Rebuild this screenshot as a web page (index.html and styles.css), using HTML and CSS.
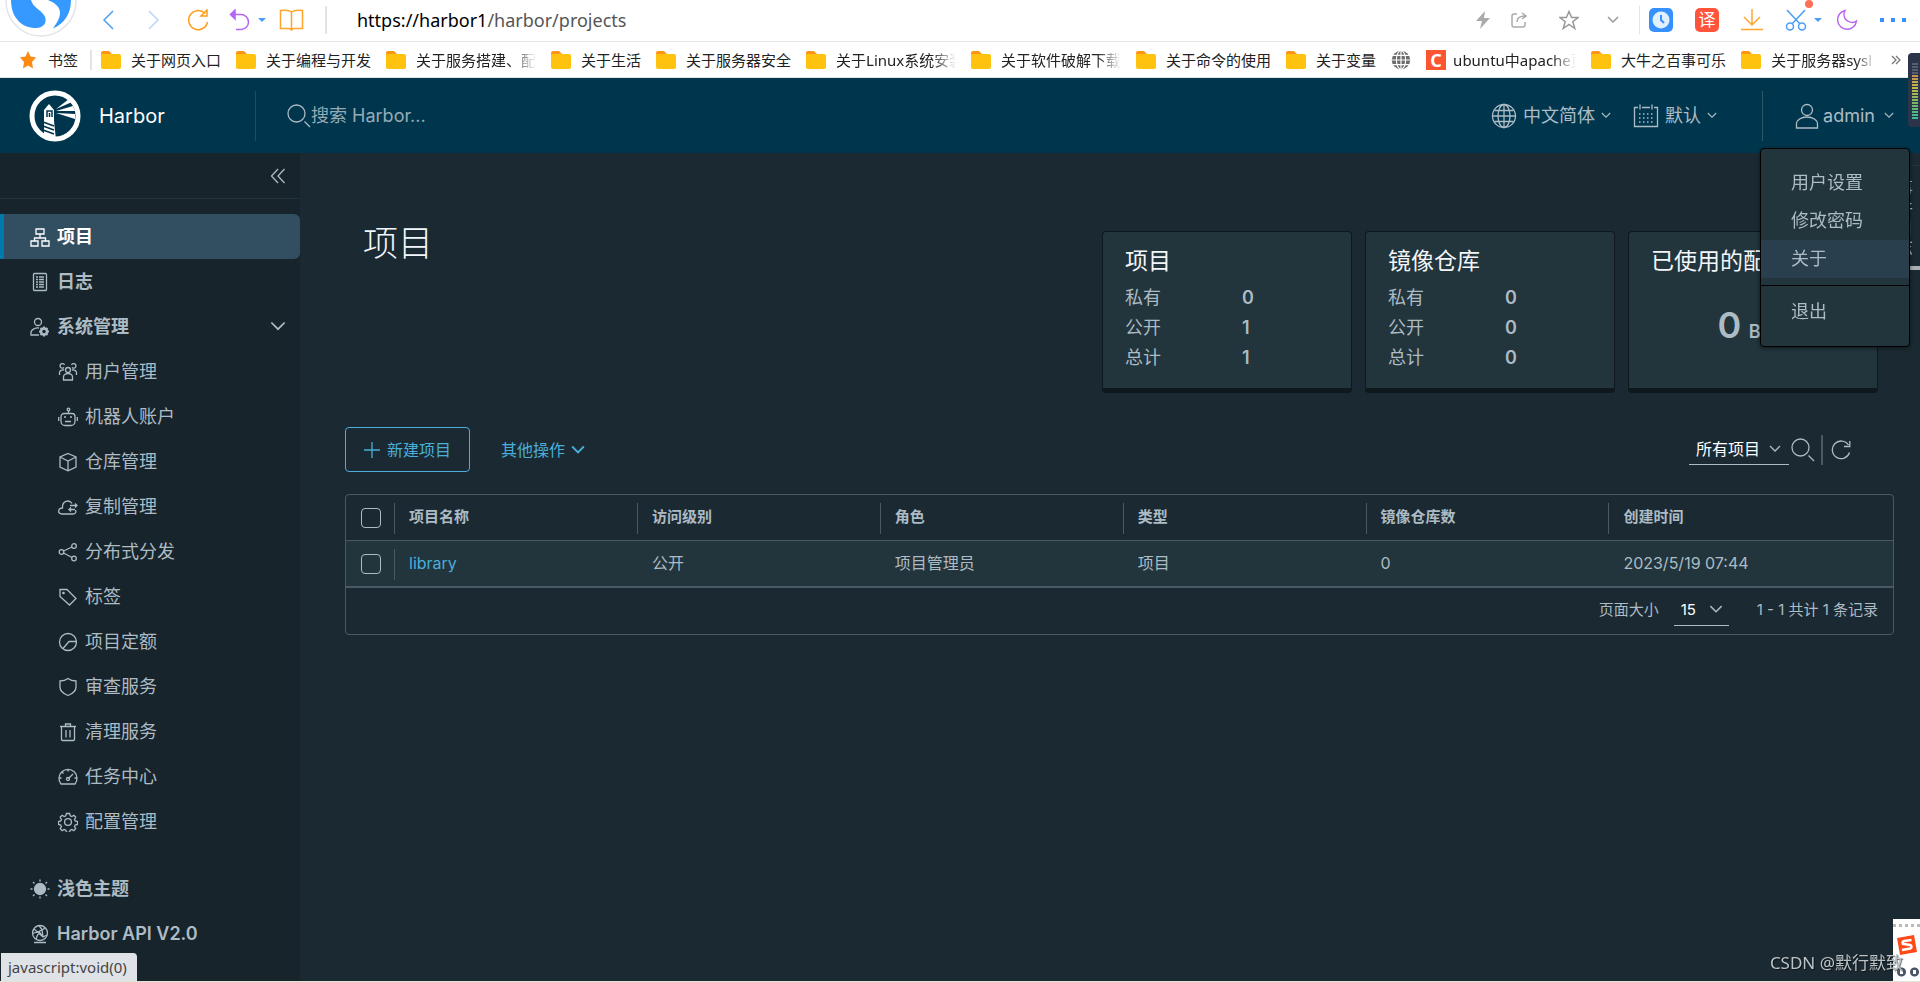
FILE: index.html
```html
<!DOCTYPE html>
<html lang="zh-CN">
<head>
<meta charset="utf-8">
<title>Harbor</title>
<link rel="stylesheet" href="styles.css">
</head>
<body>
<svg class="sprite" aria-hidden="true">
  <symbol id="folder" viewBox="0 0 20 18"><path d="M0 2a2 2 0 0 1 2-2h6l3 3v4H0z" fill="#ff9417"/><path d="M0 3h18a2 2 0 0 1 2 2v11a2 2 0 0 1-2 2H2a2 2 0 0 1-2-2z" fill="#ffc20e"/></symbol>
  <symbol id="angle" viewBox="0 0 12 8"><path d="M1 1l5 5 5-5"/></symbol>
  <symbol id="search" viewBox="0 0 24 24"><circle cx="9.500" cy="9.500" r="8.500"/><path d="M17.500 17.500l5.500 5.500"/></symbol>
  <symbol id="globe" viewBox="0 0 26 26"><circle cx="13" cy="13" r="11.500"/><ellipse cx="13" cy="13" rx="6" ry="11.500"/><path d="M13 1.500v23M1.500 13h23M3.500 7.500h19M3.500 18.500h19"/></symbol>
  <symbol id="calendar" viewBox="0 0 26 26"><path d="M5 4.500H1.500v19h23v-19H21M9 4.500h8M7 1.500v5M19 1.500v5"/><path d="M6 11h15M6 15h15M6 19h15" stroke-dasharray="1.500 2.500"/></symbol>
  <symbol id="user" viewBox="0 0 26 26"><circle cx="13" cy="7" r="5.500"/><path d="M2.500 25v-4a10.500 7 0 0 1 21 0v4z"/></symbol>
  <symbol id="org" viewBox="0 0 20 20"><path d="M6 2h8v5H6zM1 14h7v5H1zM12 14h7v5h-7zM10 7v4M4.500 14v-3h11v3"/></symbol>
  <symbol id="log" viewBox="0 0 20 20"><rect x="3.500" y="1.500" width="13" height="17" rx="1"/><path d="M6 5h2M9 5h5M6 7.500h2M9 7.500h5M6 10h2M9 10h5M6 12.500h2M9 12.500h5M6 15h2M9 15h5"/></symbol>
  <symbol id="admin" viewBox="0 0 20 20"><circle cx="8" cy="5" r="3.500"/><path d="M9 18H1v-3a7 5 0 0 1 8-4"/><circle cx="14" cy="14.500" r="3" stroke-width="2.500"/><path d="M14 9.500v2M14 17.500v2M9 14.500h2M17 14.500h2M10.500 11l1.500 1.500M16 16.500l1.500 1.500M17.500 11L16 12.500M12 16.500L10.500 18" stroke-width="2"/></symbol>
  <symbol id="group" viewBox="0 0 20 20"><circle cx="10" cy="8" r="2.500"/><path d="M5.500 18v-3a4.500 3.500 0 0 1 9 0v3zM6 5.500A2.300 2.300 0 1 1 6.500 3M14 5.500A2.300 2.300 0 1 0 13.500 3M1.500 13v-2.500a3.500 3 0 0 1 4.500-2.500M18.500 13v-2.500a3.500 3 0 0 0-4.500-2.500"/></symbol>
  <symbol id="robot" viewBox="0 0 20 20"><circle cx="10.500" cy="2.500" r="1.300"/><path d="M10.500 4v2M6 6.500h8a3 3 0 0 1 3 3v5a4 4 0 0 1-4 4H7a4 4 0 0 1-4-4v-5a3 3 0 0 1 3-3zM.7 10v4M19.300 10v4M6 10h2M12 10h2M7 14.500h6"/></symbol>
  <symbol id="box" viewBox="0 0 20 20"><path d="M10 1.500l8 3.500v10l-8 3.800L2 15V5zM2 5l8 4 8-4M10 9v9.500"/></symbol>
  <symbol id="cloud" viewBox="0 0 20 20"><path d="M17.500 13c1 2 0 4-2.500 4H4c-5 0-4-6 .5-6C4 4 11 2 14 6.500M12 8.500h7M17 6.500l2 2-2 2M17 12.500h-6M13 10.500l-2 2 2 2"/></symbol>
  <symbol id="share" viewBox="0 0 20 20"><circle cx="3.500" cy="10" r="2.300"/><circle cx="16" cy="4" r="2.300"/><circle cx="16" cy="16.500" r="2.300"/><path d="M5.500 9L14 5M5.500 11l8.500 4.500"/></symbol>
  <symbol id="tag" viewBox="0 0 20 20"><path d="M2 2.500h7l9 9-6.500 6.500L2 9.500z"/><circle cx="5.500" cy="6" r=".7"/></symbol>
  <symbol id="quota" viewBox="0 0 20 20"><circle cx="10" cy="10" r="8.500"/><path d="M18.500 9.500H11L5 16.500"/></symbol>
  <symbol id="shield" viewBox="0 0 20 20"><path d="M10 1.500c2.500 2 5 2.500 8 2.500v6c0 4-4 7-8 8.500-4-1.500-8-4.500-8-8.500V4c3 0 5.500-.5 8-2.500z"/></symbol>
  <symbol id="trash" viewBox="0 0 20 20"><path d="M2 4.500h16M3.500 4.500v13a1 1 0 0 0 1 1h11a1 1 0 0 0 1-1v-13M7.500 4V2h5v2M8 8v7.500M12 8v7.500"/></symbol>
  <symbol id="gauge" viewBox="0 0 20 20"><path d="M3 17a9 9 0 1 1 14 0zM10 2.500v2M1.500 11h2M16.500 11h2M4 5l1.500 1.500M10.500 11.500L15 7"/><circle cx="10" cy="12" r="1.500"/></symbol>
  <symbol id="cog" viewBox="0 0 20 20"><circle cx="10" cy="10" r="3.400"/><path d="M8.400 1.500h3.200l.6 2.300 1.600.7 2.100-1.200 1.800 1.900-1.200 2.200.7 1.500 2.300.7v2.800l-2.300.6-.7 1.600 1.200 2.100-1.900 1.900-2.100-1.200-1.500.7-.7 2.400H8.400l-.6-2.400-1.600-.7-2.100 1.200-1.900-1.900 1.200-2.100-.7-1.600-2.200-.6V9.600l2.200-.7.7-1.500L2.200 5.200l1.900-1.900 2.100 1.200 1.600-.7z"/></symbol>
  <symbol id="sun" viewBox="0 0 20 20"><circle cx="10" cy="10" r="5.500" fill="currentColor"/><path d="M10 .5v2M10 17.500v2M.5 10h2M17.500 10h2M3 3l1.500 1.500M15.500 15.500L17 17M17 3l-1.500 1.500M4.500 15.500L3 17"/></symbol>
  <symbol id="api" viewBox="0 0 20 20"><circle cx="10" cy="9" r="7.500"/><path d="M4 18.500h12M4 5l9 8M15.500 4L9 7.500 6 15M2.500 9.500L9 7.500l4 5.500 4-2M9 1.500l3 4 1 7.500"/></symbol>
  <symbol id="collapse" viewBox="0 0 16 16"><path d="M8 1L1.500 8 8 15M14.500 1L8 8l6.500 7"/></symbol>
</svg>

<div class="app">
  <div class="browser">
    <div class="toolbar">
      <svg class="brand-s" width="80" height="40" viewBox="0 0 80 40"><circle cx="41" cy="1" r="35" fill="#fff" stroke="#e2e4e8"/><path d="M11 0C11 18 22 28 36 28c8 0 11-6 9-11C43 11 33 8 31 0z" fill="#3699ff"/><path d="M48 0c14 6 16 14 5 28.500C64 24 71 14 71 0z" fill="#3699ff"/></svg>
      <div class="nav-buttons">
        <button class="back" aria-label="后退"><svg width="11" height="20" viewBox="0 0 11 20" stroke="#4a9df8"><path d="M10 1L1 10l9 9"/></svg></button>
        <button aria-label="前进"><svg width="11" height="20" viewBox="0 0 11 20" stroke="#b5d8fc"><path d="M1 1l9 9-9 9"/></svg></button>
        <button aria-label="刷新"><svg width="22" height="22" viewBox="0 0 22 22" stroke="#ff9d1c" stroke-width="2"><path d="M20.500 13A9.500 9.500 0 1 1 18 4.500M20 1v6h-6z"/></svg></button>
        <button class="with-caret" aria-label="撤销"><svg width="21" height="22" viewBox="0 0 21 22" stroke="#b565f5" stroke-width="2"><path d="M7 20.500h5a7.500 7.500 0 0 0 0-15H2"/><path d="M6 1L1.500 5.500 6 10z" fill="#b565f5"/></svg><i class="caret"></i></button>
        <button aria-label="书架"><svg width="25" height="22" viewBox="0 0 25 22" stroke="#ffa52e" stroke-width="2"><path d="M12.500 3C10 1 5 1 1.500 1.500v18h9l2 1.500 2-1.500h9v-18C20 1 15 1 12.500 3zv17"/></svg></button>
      </div>
      <div class="url" role="textbox" aria-label="地址栏">https://harbor1<span>/harbor/projects</span></div>
      <div class="page-actions">
        <svg width="16" height="18" viewBox="0 0 16 18"><path d="M10 0L1 10h6L5 18l10-11H9z" fill="#aaa"/></svg>
        <svg width="16" height="16" viewBox="0 0 16 16" stroke="#aaa" stroke-width="2"><path d="M6 2H3a2 2 0 0 0-2 2v9a2 2 0 0 0 2 2h9a2 2 0 0 0 2-2v-3M6 10c0-4 2-6 8-6M11 1l4 3-4 3"/></svg>
        <svg width="20" height="20" viewBox="0 0 20 20" stroke="#999"><path d="M10 1.500l2.600 6H19l-5.200 4.200 2 6.800-5.800-4-5.800 4 2-6.800L1 7.500h6.400z"/></svg>
        <svg width="12" height="8" stroke="#999"><use href="#angle"/></svg>
      </div>
      <div class="extensions">
        <svg width="24" height="24" viewBox="0 0 24 24"><rect width="24" height="24" rx="5" fill="#3691ff"/><circle cx="12" cy="12" r="8.500" fill="#e0f0ff"/><path d="M12 7v5l3 3" stroke="#3691ff" stroke-width="2"/></svg>
        <span class="translate">译</span>
        <svg width="22" height="22" viewBox="0 0 22 22" stroke="#ffa52e" stroke-width="2"><path d="M11 0v16M3 8l8 8 8-8M0 20.500h22"/></svg>
        <span class="with-caret scissors"><svg width="22" height="22" viewBox="0 0 22 22" stroke="#4a9df8"><path d="M2 1l13 14M20 1L7 15"/><circle cx="5" cy="17.500" r="3.500"/><circle cx="17" cy="17.500" r="3.500"/></svg><i class="caret"></i></span>
        <svg width="22" height="22" viewBox="0 0 22 22" stroke="#b565f5" stroke-width="2"><path d="M9 1.500A8 8 0 0 0 20.500 12 9.500 9.500 0 1 1 9 1.500z"/></svg>
        <svg width="26" height="4" viewBox="0 0 26 4"><path d="M0 0h4v4H0zM11 0h4v4h-4zM22 0h4v4h-4z" fill="#3691ff"/></svg>
      </div>
    </div>
    <nav class="bookmarks">
      <a class="marks" href="#"><svg width="16" height="18" viewBox="0 0 16 18"><path d="M8 0l2.500 5.500L16 6.500l-4 4.500 1 6.500-5-3-5 3L4 11 0 6.500l5.500-1z" fill="#ff8a12"/></svg>书签</a>
      <a href="#"><svg width="20" height="18"><use href="#folder"/></svg><span>关于网页入口</span></a>
      <a href="#"><svg width="20" height="18"><use href="#folder"/></svg><span>关于编程与开发</span></a>
      <a href="#" class="faded"><svg width="20" height="18"><use href="#folder"/></svg><span>关于服务搭建、配</span></a>
      <a href="#"><svg width="20" height="18"><use href="#folder"/></svg><span>关于生活</span></a>
      <a href="#"><svg width="20" height="18"><use href="#folder"/></svg><span>关于服务器安全</span></a>
      <a href="#" class="faded"><svg width="20" height="18"><use href="#folder"/></svg><span>关于Linux系统安装</span></a>
      <a href="#" class="faded"><svg width="20" height="18"><use href="#folder"/></svg><span>关于软件破解下载</span></a>
      <a href="#"><svg width="20" height="18"><use href="#folder"/></svg><span>关于命令的使用</span></a>
      <a href="#"><svg width="20" height="18"><use href="#folder"/></svg><span>关于变量</span></a>
      <a href="#" aria-label="网页"><svg width="20" height="20" viewBox="0 0 26 26"><circle cx="13" cy="13" r="12" fill="#6b6b6b"/><g stroke="#fff" stroke-width="1.500"><ellipse cx="13" cy="13" rx="6" ry="12"/><path d="M13 1v24M1 13h24M2 7h22M2 19h22"/></g></svg></a>
      <a href="#" class="faded site"><b class="c-icon">C</b><span>ubuntu中apache页</span></a>
      <a href="#"><svg width="20" height="18"><use href="#folder"/></svg><span>大牛之百事可乐</span></a>
      <a href="#" class="faded last"><svg width="20" height="18"><use href="#folder"/></svg><span>关于服务器sysl</span></a>
      <button class="more" aria-label="更多书签"><svg width="10" height="10" viewBox="0 0 10 10" stroke="#777"><path d="M1 1l4 4-4 4M5 1l4 4-4 4"/></svg></button>
    </nav>
  </div>

  <header class="header">
    <a class="logo" href="#">
      <svg width="52" height="52" viewBox="0 0 52 52"><circle cx="26" cy="26" r="23" fill="none" stroke="#fff" stroke-width="5"/><path d="M15 20l5-6 5 6v11H15z" fill="#fff"/><path d="M18 27v-6h5v6M20.500 27v-4" stroke="#00364d" stroke-width="1.500"/><path d="M15 31h10l2 19-12-3z" fill="#fff"/><path d="M14 32l11 4M14 36l11 4M14 40l11 4" stroke="#00364d" stroke-width="1.500"/><path d="M27 19l13-10 3 3zM27 21l17-5 2 5zM27 23l19 1v5z" fill="#fff"/></svg>
      <span>Harbor</span>
    </a>
    <label class="search"><svg width="24" height="24"><use href="#search"/></svg><input type="text" placeholder="搜索 Harbor..." aria-label="搜索 Harbor"></label>
    <div class="header-actions">
      <button><svg width="26" height="26"><use href="#globe"/></svg><span>中文简体</span><svg width="10" height="7"><use href="#angle"/></svg></button>
      <button><svg width="26" height="26"><use href="#calendar"/></svg><span>默认</span><svg width="10" height="7"><use href="#angle"/></svg></button>
    </div>
    <div class="account">
      <button><svg width="26" height="26"><use href="#user"/></svg><span>admin</span><svg width="10" height="7"><use href="#angle"/></svg></button>
      <div class="menu">
        <a href="#">用户设置</a>
        <a href="#">修改密码</a>
        <a href="#" class="hover">关于</a>
        <hr>
        <a href="#">退出</a>
      </div>
    </div>
  </header>

  <div class="content">
    <aside class="sidebar">
      <div class="collapse"><button aria-label="收起"><svg width="16" height="16"><use href="#collapse"/></svg></button></div>
      <nav class="side-nav">
        <a class="active" href="#"><svg><use href="#org"/></svg>项目</a>
        <a href="#"><svg><use href="#log"/></svg>日志</a>
        <a href="#"><svg><use href="#admin"/></svg>系统管理<svg class="expand"><use href="#angle"/></svg></a>
        <div class="sub">
          <a href="#"><svg><use href="#group"/></svg>用户管理</a>
          <a href="#"><svg><use href="#robot"/></svg>机器人账户</a>
          <a href="#"><svg><use href="#box"/></svg>仓库管理</a>
          <a href="#"><svg><use href="#cloud"/></svg>复制管理</a>
          <a href="#"><svg><use href="#share"/></svg>分布式分发</a>
          <a href="#"><svg><use href="#tag"/></svg>标签</a>
          <a href="#"><svg><use href="#quota"/></svg>项目定额</a>
          <a href="#"><svg><use href="#shield"/></svg>审查服务</a>
          <a href="#"><svg><use href="#trash"/></svg>清理服务</a>
          <a href="#"><svg><use href="#gauge"/></svg>任务中心</a>
          <a href="#"><svg><use href="#cog"/></svg>配置管理</a>
        </div>
        <a href="#"><svg><use href="#sun"/></svg>浅色主题</a>
        <a href="#"><svg><use href="#api"/></svg>Harbor API V2.0</a>
      </nav>
    </aside>

    <main class="main">
      <div class="summary">
        <h1>项目</h1>
        <div class="cards">
          <section class="card"><h2>项目</h2><dl><dt>私有</dt><dd>0</dd><dt>公开</dt><dd>1</dd><dt>总计</dt><dd>1</dd></dl></section>
          <section class="card"><h2>镜像仓库</h2><dl><dt>私有</dt><dd>0</dd><dt>公开</dt><dd>0</dd><dt>总计</dt><dd>0</dd></dl></section>
          <section class="card"><h2>已使用的配额</h2><p class="quota"><strong>0</strong> Byte</p></section>
        </div>
      </div>

      <div class="actions">
        <button class="create"><svg width="16" height="16" viewBox="0 0 16 16"><path d="M8 0v16M0 8h16"/></svg>新建项目</button>
        <button class="other">其他操作<svg width="14" height="10"><use href="#angle"/></svg></button>
        <div class="filters">
          <div class="select filter"><select aria-label="项目筛选"><option>所有项目</option></select><svg width="12" height="8"><use href="#angle"/></svg></div>
          <button aria-label="搜索"><svg width="24" height="24"><use href="#search"/></svg></button>
          <button class="refresh" aria-label="刷新"><svg width="20" height="20" viewBox="0 0 20 20"><path d="M18.500 12.500A8.800 8.800 0 1 1 17.500 5M18.800 1v5.500H13"/></svg></button>
        </div>
      </div>

      <div class="grid">
        <table>
          <colgroup><col class="col-check"><col class="col"><col class="col"><col class="col"><col class="col"><col class="col"><col></colgroup>
          <thead><tr><th><input type="checkbox" aria-label="全选"></th><th>项目名称</th><th>访问级别</th><th>角色</th><th>类型</th><th>镜像仓库数</th><th>创建时间</th></tr></thead>
          <tbody><tr><td><input type="checkbox" aria-label="选择 library"></td><td><a href="#">library</a></td><td>公开</td><td>项目管理员</td><td>项目</td><td>0</td><td>2023/5/19 07:44</td></tr></tbody>
        </table>
        <div class="pager">
          <label for="size">页面大小</label>
          <div class="select size"><select id="size"><option>15</option></select><svg width="14" height="9"><use href="#angle"/></svg></div>
          <span>1 - 1 共计 1 条记录</span>
        </div>
      </div>
    </main>
  </div>
</div>

<div class="events">事件日志</div>
<div class="status">javascript:void(0)</div>
<div class="meter"><i></i></div>
<div class="ime"><svg width="21" height="22" viewBox="0 0 21 22"><path d="M1 4l17-3 3 17-17 3z" fill="#ff4a17"/><path d="M15.500 6L8 7c-2 .5-2 3 0 3l6 1c2 .5 2 3 0 3.500L6 16" stroke="#fff" stroke-width="2.500"/></svg></div>
<div class="watermark">CSDN @默行默致</div>
</body>
</html>
```
FILE: styles.css
```css
* { box-sizing: border-box; }

body {
  margin: 0;
  background: #1b2a32;
  color: #adbbc4;
  font: 18px/24px Inter, "Noto Sans CJK SC", sans-serif;
  overflow: hidden;
}

a { color: inherit; text-decoration: none; }
svg { fill: none; stroke-width: 1.3; flex: none; }
.sprite { position: absolute; width: 0; height: 0; }

button {
  display: flex;
  align-items: center;
  padding: 0;
  border: 0;
  background: none;
  color: inherit;
  font: inherit;
}

.app {
  display: flex;
  flex-direction: column;
  min-height: 100vh;
  border-bottom: 1px solid #dce6d2;
}

/* Browser chrome */
.browser {
  background: #fff;
  color: #222;
  font-family: "Noto Sans", "Noto Sans CJK SC", sans-serif;
}

.toolbar {
  display: flex;
  align-items: center;
  height: 42px;
  padding-bottom: 2px;
  border-bottom: 1px solid #e2e4e6;
}

.toolbar svg { stroke-width: 1.5; }
.brand-s { align-self: flex-start; }

.nav-buttons {
  display: flex;
  align-items: center;
  gap: 28px;
  height: 28px;
  padding: 0 21px 0 23px;
  border-right: 2px solid #e2e4e6;
}

.nav-buttons .back { margin-right: 6px; }
.nav-buttons .with-caret { margin: 0 -15px 0 -8px; }
.with-caret { display: flex; align-items: center; gap: 8px; }
.caret { border: 4px solid transparent; border-top-color: #4a9df8; border-bottom: 0; }

.url {
  flex: 1;
  padding-left: 30px;
  color: #000;
  font-size: 18px;
}

.url span { color: #555; }

.page-actions {
  display: flex;
  align-items: center;
  gap: 32px;
  height: 28px;
  padding-right: 20px;
  border-right: 1px solid #e2e4e6;
}

.page-actions svg:first-child { margin-right: -12px; }
.page-actions svg:last-child { margin-left: -4px; }

.extensions {
  display: flex;
  align-items: center;
  gap: 22px;
  padding: 0 14px 0 9px;
}

.translate {
  width: 24px;
  border-radius: 5px;
  background: #ff553d;
  color: #fff;
  font-size: 17px;
  text-align: center;
}

.scissors { position: relative; gap: 7px; margin-right: -8px; }

.scissors::before {
  content: "";
  position: absolute;
  top: -9px;
  left: 20px;
  width: 8px;
  height: 8px;
  border-radius: 50%;
  background: #ff7058;
}

.bookmarks {
  display: flex;
  align-items: center;
  gap: 15px;
  height: 36px;
  padding: 0 20px;
  border-bottom: 1px solid #e2e4e6;
  font-size: 15px;
  line-height: 20px;
}

.bookmarks a {
  display: flex;
  flex: none;
  align-items: center;
  gap: 10px;
  white-space: nowrap;
}

.bookmarks .marks {
  gap: 12px;
  margin-right: -6px;
  padding-right: 12px;
  border-right: 2px solid #e2e4e6;
}

.faded span {
  width: 120px;
  overflow: hidden;
  mask-image: linear-gradient(to right, #000 80%, transparent);
}

.bookmarks .site { gap: 7px; }
.site span { width: 123px; }
.last span { width: 105px; }

.c-icon {
  width: 20px;
  background: #fc5531;
  color: #fff;
  font-size: 18px;
  text-align: center;
}

/* Header */
.header {
  position: relative;
  z-index: 2;
  display: flex;
  align-items: center;
  height: 75px;
  background: #00364d;
}

.header svg { stroke: #adbbc4; }

.logo {
  display: flex;
  align-items: center;
  gap: 18px;
  width: 256px;
  height: 50px;
  padding-left: 29px;
  border-right: 1px solid #224e62;
  color: #fff;
  font-size: 20px;
}

.logo svg { stroke: none; }

.search {
  display: flex;
  flex: 1;
  align-items: center;
  padding-left: 31px;
}

.search input {
  flex: 1;
  padding: 0;
  border: 0;
  outline: 0;
  background: none;
  color: #fff;
  font: inherit;
}

.search input::placeholder { color: #96abb6; opacity: 1; }

.header-actions {
  display: flex;
  gap: 22px;
  padding-right: 45px;
}

.header-actions button { gap: 6px; }

.account {
  position: relative;
  display: flex;
  align-items: center;
  height: 50px;
  padding: 0 26px 0 31px;
  border-left: 1px solid #2c566a;
}

.account button { gap: 3px; }
.account button svg:last-child { margin-left: 6px; }

.menu {
  position: absolute;
  z-index: 3;
  top: 57px;
  right: 10px;
  width: 150px;
  padding: 15px 0;
  border: 1px solid #000;
  border-radius: 4px;
  background: #22343c;
  box-shadow: 0 1px 4px #0008;
}

.menu a { display: block; padding: 7px 0 7px 30px; }
.menu .hover { background: #293f4d; }
.menu hr { margin: 7px 0; border: 0; border-top: 1px solid #000; }

/* Sidebar */
.content { display: flex; flex: 1; }

.sidebar {
  flex: none;
  width: 300px;
  background: #17242b;
}

.collapse {
  display: flex;
  align-items: center;
  justify-content: flex-end;
  height: 46px;
  padding-right: 14px;
  border-bottom: 1px solid #22323a;
}

.sidebar svg, .filters svg, .pager svg { stroke: #adbbc4; }
.side-nav { padding-top: 15px; font-weight: 600; }

.side-nav a {
  display: flex;
  align-items: center;
  gap: 7px;
  height: 45px;
  padding: 0 14px 0 30px;
}

.side-nav svg { width: 20px; height: 20px; }

.side-nav .active {
  padding-left: 26px;
  border-left: 4px solid #0079ad;
  border-radius: 0 6px 6px 0;
  background: #324f62;
  color: #fff;
}

.side-nav .active svg { stroke: #fff; }
.side-nav .expand { width: 16px; height: 11px; margin-left: auto; }
.sub { margin-bottom: 22px; font-weight: 400; }
.side-nav .sub a { padding-left: 58px; }

/* Project page */
.main {
  flex: 1;
  min-width: 0;
  padding: 78px 26px 24px 45px;
}

.summary {
  display: flex;
  justify-content: space-between;
  padding: 0 16px 0 18px;
}

h1, h2 { margin: 0; color: #f2f6f8; }
h1 { margin-top: -9px; font-size: 35px; font-weight: 300; line-height: 42px; }
h2 { font-size: 23px; font-weight: 400; line-height: 30px; }
.cards { display: flex; gap: 13px; }

.card {
  width: 250px;
  height: 162px;
  padding: 14px 22px;
  border: 1px solid #0f181d;
  border-bottom-width: 5px;
  border-radius: 4px;
  background: #22343c;
}

dl {
  display: grid;
  grid-template-columns: 117px 1fr;
  margin: 7px 0 0;
  line-height: 30px;
}

dd { margin: 0; font-weight: 600; }
.quota { margin: 37px 0 0; font-weight: 600; text-align: center; }
.quota strong { margin-right: 3px; font-size: 36px; font-weight: 600; }

.actions {
  display: flex;
  align-items: center;
  margin-top: 34px;
  color: #49afd9;
  font-size: 16px;
}

.actions .create {
  gap: 7px;
  height: 45px;
  padding: 0 18px;
  border: 1px solid #49afd9;
  border-radius: 4px;
}

.create svg, .other svg { stroke: #49afd9; }
.other { gap: 6px; margin-left: 31px; }
.other svg { stroke-width: 1.6; }

.filters {
  display: flex;
  align-items: center;
  margin-left: auto;
  margin-right: 43px;
}

.select { position: relative; display: flex; align-items: center; border-bottom: 1px solid #adbbc4; }
.select svg { position: absolute; right: 8px; pointer-events: none; }

select {
  width: 100%;
  padding: 0 7px;
  border: 0;
  outline: 0;
  appearance: none;
  background: none;
  color: #fff;
  font: inherit;
}

.filter { width: 100px; height: 30px; margin-right: 2px; }

.refresh {
  height: 30px;
  margin-left: 6px;
  padding-left: 8px;
  border-left: 2px solid #495a67;
}

/* Data grid */
.grid {
  margin-top: 22px;
  border: 1px solid #495a67;
  border-radius: 4px;
  font-size: 16px;
}

table { width: 100%; table-layout: fixed; border-collapse: separate; border-spacing: 0; }
.col-check { width: 49px; }
.col { width: 15.7%; }
th, td { position: relative; height: 46px; padding: 0 14px 2px; text-align: left; vertical-align: middle; white-space: nowrap; }
th { border-bottom: 1px solid #495a67; font-size: 15px; font-weight: 600; }
td { height: 47px; border-bottom: 2px solid #495a67; background: #22343c; }
td a { color: #49afd9; }

th:not(:last-child)::after, td:first-child::after {
  content: "";
  position: absolute;
  top: 8px;
  right: 0;
  width: 1px;
  height: 31px;
  background: #495a67;
}

input[type="checkbox"] {
  display: block;
  width: 20px;
  height: 20px;
  margin: 3px 0 0 1px;
  border: 1px solid #adbbc4;
  border-radius: 4px;
  appearance: none;
}

.pager {
  display: flex;
  align-items: center;
  justify-content: flex-end;
  height: 46px;
  padding: 0 15px 2px 0;
  font-size: 15px;
}

.size { width: 55px; height: 31px; margin: 0 28px 0 15px; }
.size svg { right: 6px; }

/* Desktop overlays */
.events {
  position: fixed;
  z-index: 1;
  top: 165px;
  right: 0;
  width: 24px;
  height: 105px;
  padding: 12px 7px 0 0;
  border-top: 1px solid #24353e;
  border-bottom: 4px solid #a9afb3;
  font-size: 17px;
  line-height: 20px;
  overflow-wrap: anywhere;
}

.status {
  position: fixed;
  bottom: 1px;
  left: 1px;
  padding: 2px 10px 2px 7px;
  border-radius: 0 4px 0 0;
  background: #dfe2e7;
  color: #444;
  font: 15px/24px "Noto Sans", sans-serif;
}

.meter {
  position: fixed;
  z-index: 4;
  top: 53px;
  right: 0;
  width: 12px;
  height: 74px;
  padding: 9px 2px 7px 4px;
  border-radius: 4px 0 0 4px;
  background: #2b3448;
}

.meter i {
  display: block;
  height: 100%;
  background:
    repeating-linear-gradient(#2b3448 0 1px, transparent 1px 3px),
    linear-gradient(#555e70 20%, #c98d4f 22%, #bdbb4d 45%, #6cb56a 75%, #36bda0);
}

.ime {
  position: fixed;
  right: 0;
  bottom: 1px;
  width: 27px;
  height: 62px;
  padding: 15px 0 0 3px;
  background:
    radial-gradient(circle, #fff 2px, #4b5668 2px 4px, #fff 5px) 2px 48px / 13px 10px repeat-x,
    linear-gradient(90deg, #bbb 50%, #fff 50%) 0 5px / 6px 3px repeat-x,
    #fff;
}

.watermark {
  position: fixed;
  right: 17px;
  bottom: 7px;
  color: #bcc3c7;
  font: 17px/24px "Noto Sans", "Noto Sans CJK SC", sans-serif;
  text-shadow: 1px 1px 1px #0009;
}
```
